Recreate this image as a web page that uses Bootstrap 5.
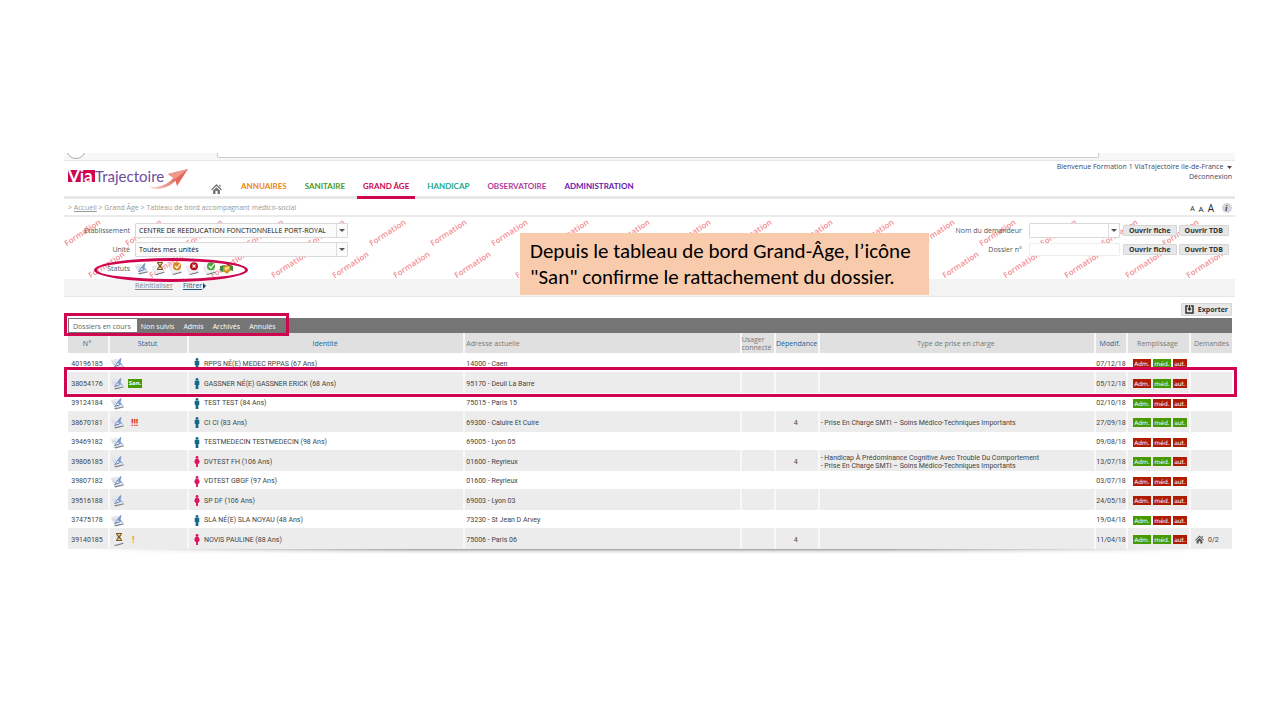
<!DOCTYPE html>
<html lang="fr">
<head>
<meta charset="utf-8">
<meta name="viewport" content="width=device-width, initial-scale=1">
<title>ViaTrajectoire - Tableau de bord</title>
<link rel="stylesheet" href="https://cdn.jsdelivr.net/npm/bootstrap@5.3.0/dist/css/bootstrap.min.css">
<style>
:root{--vt-pink:#cf0550;--vt-line:#e8e8e8}
body{font:7px/10px "Open Sans","Noto Sans",sans-serif;color:#555;background:#fff}
.app{padding:153px 45px 0 64px}
.browser{height:8px;background:#f7f7f7;border-bottom:1px solid #e6e6e6}
.browser .ring{width:20px;height:20px;margin:-14px 0 0 2px;border:1px solid #aaa;background:#fff}
.browser .address{height:5px;margin:0 136px 0 131px;background:#fff;border:1px solid #ccc;border-top:0;border-radius:0 0 2px 2px}
.top{height:38px;border-bottom:3px solid var(--vt-line)}
.logo{width:122px;height:32px;margin:3px 0 0 3px}
.menu{margin-left:16px}
.menu a{font:700 8px/12px Lato,sans-serif;margin:0 3px -3px;padding:0 6px 4px;border-bottom:3px solid transparent;text-decoration:none}
.menu a.home{margin-left:0;padding-bottom:2px}
.menu a.active{border-color:var(--vt-pink)}
.c-ann{color:#ee8512}.c-san{color:#4e9a1c}.c-age{color:#cf0550}.c-han{color:#1ea88a}.c-obs{color:#b13a9e}.c-adm{color:#6417b0}
.user{padding:1px 3px 0 0;line-height:10px;color:#3b4868}
.user a{color:inherit;text-decoration:none}
.crumbs{height:18px;border-bottom:2px solid #ebebeb;padding:2px 3px 0 4px;color:#999}
.crumbs a{color:#999}
.a-s{font-size:7px;line-height:9px}.a-m{font-size:8px;line-height:9px}.a-l{font-size:10px;line-height:10px}
.panel-top{height:62px;padding-top:4px}
.watermark{inset:0;width:100%;height:100%;font:700 8px "Open Sans",sans-serif;fill:#ee6a72;opacity:.65;pointer-events:none}
.line{height:19px}
.left .line>label,.left .line>.cap{width:66px;margin-right:5px;text-align:right}
.field{font:7px/10px "Open Sans",sans-serif;color:#111;height:15px;padding:2px 16px 1px 3px;border:1px solid #d9d9d9;border-radius:1px;background:#fbfbfb;appearance:none;outline-offset:0}
.picker{width:213px}
.picker .field{width:100%}
.picker::after{content:"";right:3px;top:6px;border:3px solid transparent;border-top-color:#555;position:absolute;pointer-events:none}
.picker::before{content:"";right:11px;top:1px;bottom:1px;width:1px;background:#ddd;position:absolute}
.picker.short{width:91px;margin:0 3px 0 7px}
.picker.short .field{background:#fff}
.right-side{padding-right:6px}
.free{width:91px;height:13px;margin:0 3px 0 7px;background:#fff;border-color:#eee}
.push{font:700 7px/9px "Open Sans",sans-serif;color:#333;background:#e7e7e7;border:1px solid #d6d6d6;height:11px;padding:0 5px;border-radius:1px}
.push+.push{margin-left:2px}
.st{width:13px;height:13px;margin-right:4px}
.ellipse{left:30px;top:41px;width:154px;height:24px;border:3px solid var(--vt-pink);border-radius:50%}
.panel-links{height:18px;background:#f3f3f3;border-bottom:1px solid #e6e6e6;padding:2px 0 0 71px;color:#888}
.panel-links a{color:#888;margin-right:10px}
.panel-links a.go{color:#1c5c8c;margin:0 1px 0 0}
.note{left:456px;top:16px;width:409px;padding:5px 10px;background:#f8cbad;color:#000;font:21px/26px Carlito,Calibri,sans-serif;z-index:3}
.work{padding:0 3px 0 4px}
.export-row{height:21px;padding-top:6px}
.push.exp{height:13px;line-height:11px;padding:0 3px}
.tabs{background:#757575;height:15px;padding:1px 0 1px 1px}
.tabs button{font:7px/13px "Open Sans",sans-serif;color:#fff;border:0;background:none;padding:1px 5px 0 4px}
.tabs button.on{background:#fff;color:#666;padding:1px 6px 0 4px}
.frame{border:3px solid var(--vt-pink);position:absolute;pointer-events:none;z-index:2}
.frame.tabs-frame{left:-4px;top:-5px;width:225px;height:23px}
.records{table-layout:fixed;margin:0;border-collapse:separate;border-spacing:0;color:#444;--bs-table-bg:transparent}
.records>:not(caption)>*>*{padding:2px 3px 0 1px;border:0;border-right:2px solid #f8f8f8;vertical-align:middle;line-height:8px;color:inherit;background:none;box-shadow:none}
.records>:not(caption)>*>:last-child{border-right:0}
.records thead th{height:20px;background:#e0e0e0;font-weight:400;text-align:center;color:#777;white-space:nowrap}
.records thead th.s{color:#1a649b}
.records tbody td{font:7px/8px Roboto,sans-serif;height:18px;white-space:nowrap}
.records tbody tr:first-child td{height:19px}
.records tbody tr:nth-child(even) td{height:21px;background:#ececec}
.records tbody tr:nth-child(odd) td{border-color:#fff}
.records tr.picked{position:relative}
.records tr.picked .frame{inset:-5px -5px -4px -4px}
.pill{display:inline-block;height:9px;font:6px/9px "DejaVu Sans",sans-serif;color:#fff;text-align:center;background:#b01c00;width:18px;margin-right:2px;vertical-align:middle}
.pill.ok{background:#479a00}
.pill.thin{width:14px;margin:0}
.pill.sanitaire{font:700 6px/9px "Open Sans",sans-serif}
.alert-high,.alert-low{font-size:9px;margin-left:3px;color:#d8260c}
.alert-low{color:#ee9a1c;margin-left:4px}
.shade{height:5px;background:linear-gradient(#999,#ddd 40%,#fff);mask-image:linear-gradient(90deg,transparent 2%,#000 30%,#000 70%,transparent 98%)}
svg{display:block}
</style>
</head>
<body>
<svg width="0" height="0" class="position-absolute" aria-hidden="true">
  <defs>
    <symbol id="sheet" viewBox="0 0 13 13"><path d="M3 12l9-2.500.5 1.200L4.500 13z" fill="#6f7378"/><path d="M0 5l7-2 5.500 6.500-9 2.500z" fill="#eeeff2" stroke="#cdd1d6" stroke-width=".4"/></symbol>
    <symbol id="write" viewBox="0 0 13 13"><path d="M3 11l9.500-1.800.5 1.100L4.500 12.500z" fill="#7d8187"/><path d="M0 3.500l6-1.500L12.500 9 4 11z" fill="#eceef2" stroke="#d0d4da" stroke-width=".4"/><path d="M1.500 4.500L5 9M3.500 4l2 2.500" stroke="#b5bbc8" stroke-width=".7"/><path d="M3.500 9.500L5 6.500 9.500 1l1 .8-1 3.700 2.500 3.300-3-1.300z" fill="#7f9ace"/><path d="M4 9.500l3-3.500 1 1.500z" fill="#fff"/><path d="M3.500 9.500l5-1.500" stroke="#4f6dab" stroke-width=".9"/></symbol>
    <symbol id="wait" viewBox="0 0 13 13"><use href="#sheet"/><path d="M5 0h6v1L9 4l2 3v1H5V7l2-3-2-3z" fill="#7b5a23"/><path d="M6 1h4L8 3zM8 5l2 2H6z" fill="#eed28a"/></symbol>
    <symbol id="valid" viewBox="0 0 13 13"><use href="#sheet"/><circle cx="8" cy="4.200" r="4" fill="#d9851c"/><path d="M6 4l2 2 3-4" fill="none" stroke="#fff" stroke-width="1.200"/></symbol>
    <symbol id="refuse" viewBox="0 0 13 13"><use href="#sheet"/><circle cx="8" cy="4.200" r="4" fill="#b90d1d"/><path d="M6.500 2.700l3 3m0-3l-3 3" stroke="#fff" stroke-width="1.200"/></symbol>
    <symbol id="accept" viewBox="0 0 13 13"><use href="#sheet"/><circle cx="8" cy="4.200" r="4" fill="#4aa63c"/><path d="M6 4l2 2 3-4" fill="none" stroke="#fff" stroke-width="1.200"/></symbol>
    <symbol id="shake" viewBox="0 0 13 13"><path d="M0 4l5-1v6l-3 1-2-2z" fill="#3c8a3f"/><path d="M3 5l4-2 4 1v4l-4 4-4-3z" fill="#cf9428"/><path d="M4 6l4-2 2 2-4 3z" fill="#f6dc83"/><path d="M10 3l3 1v5l-3-1z" fill="#567f2c"/><path d="M7 2h2l1 2H8z" fill="#8c3318"/></symbol>
    <symbol id="man" viewBox="0 0 6 12"><circle cx="3" cy="1.500" r="1.500"/><path d="M.5 3h5v4.500H4.500V12h-3V7.500H.5z"/></symbol>
    <symbol id="woman" viewBox="0 0 6 12"><circle cx="3" cy="1.500" r="1.500"/><path d="M1.500 3h3L6 6 5 8.500H4V12H2V8.500H1L0 6z"/></symbol>
    <symbol id="house" viewBox="0 0 11 10"><path d="M0 5.500L5.500 0 11 5.500l-1 .8L5.500 2 1 6.300zM2 6.500L5.500 3.200 9 6.500V10H6.500V7h-2v3H2zM8.200.8h1.300v2.500L8.200 2z"/></symbol>
  </defs>
</svg>

<div class="app">
  <div class="browser overflow-hidden d-flex" aria-hidden="true"><div class="ring rounded-circle"></div><div class="address flex-grow-1"></div></div>

  <header class="top d-flex">
    <svg class="logo flex-shrink-0" viewBox="0 0 122 32" role="img" aria-label="ViaTrajectoire">
      <defs><linearGradient id="sw" x1="0" x2="1"><stop offset="0" stop-color="#fdeeea"/><stop offset="1" stop-color="#e0655c"/></linearGradient></defs>
      <path d="M80 22c10 6 23 2 31-8l-3-2c-6 8-16 13-28 10z" fill="url(#sw)"/>
      <path d="M101 10l20-5-11 17-2-7z" fill="#e4685f"/><path d="M101 10l20-5-13 10z" fill="#f09a8c"/>
      <rect x="1" y="6" width="27" height="12" fill="#cf0550"/>
      <text x="1" y="18" font-family="Lato" font-weight="700" font-size="17" fill="#fff">Via</text>
      <text x="28" y="18" font-family="Lato" font-weight="400" font-size="15" fill="#6e4b9b">Trajectoire</text>
    </svg>
    <nav class="menu d-flex align-items-end" aria-label="Principal">
      <a class="home" href="#" aria-label="Accueil"><svg width="11" height="10" fill="#777"><use href="#house"/></svg></a>
      <a class="c-ann ms-1" href="#">ANNUAIRES</a>
      <a class="c-san" href="#">SANITAIRE</a>
      <a class="c-age active" href="#">GRAND ÂGE</a>
      <a class="c-han" href="#">HANDICAP</a>
      <a class="c-obs" href="#">OBSERVATOIRE</a>
      <a class="c-adm" href="#">ADMINISTRATION</a>
    </nav>
    <div class="user ms-auto text-end"><div>Bienvenue Formation 1 ViaTrajectoire Ile-de-France &nbsp;<svg class="d-inline-block" width="5" height="3"><path d="M0 0h5L2.500 3z" fill="#444"/></svg></div><a href="#">Déconnexion</a></div>
  </header>

  <div class="crumbs d-flex align-items-center">
    <div>&gt; <a href="#">Accueil</a> &gt; Grand Âge &gt; Tableau de bord accompagnant médico-social</div>
    <div class="ms-auto d-flex align-items-end text-dark"><span class="a-s">A</span><span class="a-m mx-1">A</span><span class="a-l">A</span>
      <svg class="ms-2" width="10" height="10"><circle cx="5" cy="5" r="5" fill="#d5d5d5"/><text x="3" y="8" font-family="Liberation Serif" font-style="italic" font-weight="700" font-size="9" fill="#444">i</text></svg></div>
  </div>

  <section class="position-relative">
    <div class="panel-top position-relative">
      <svg class="watermark position-absolute" aria-hidden="true" id="wm"></svg>
      <div class="d-flex justify-content-between position-relative">
        <div class="left">
          <div class="line d-flex align-items-center"><label for="etab">Établissement</label><div class="picker position-relative"><select class="field" id="etab"><option>CENTRE DE REEDUCATION FONCTIONNELLE PORT-ROYAL</option></select></div></div>
          <div class="line d-flex align-items-center"><label for="unite">Unité</label><div class="picker position-relative"><select class="field" id="unite"><option>Toutes mes unités</option></select></div></div>
          <div class="line d-flex align-items-center"><span class="cap">Statuts</span>
            <svg class="st"><use href="#write"/></svg><svg class="st"><use href="#wait"/></svg><svg class="st"><use href="#valid"/></svg><svg class="st"><use href="#refuse"/></svg><svg class="st"><use href="#accept"/></svg><svg class="st"><use href="#shake"/></svg></div>
        </div>
        <div class="right-side">
          <div class="line d-flex align-items-center justify-content-end"><label for="nom">Nom du demandeur</label><div class="picker short position-relative"><select class="field" id="nom"><option></option></select></div><button class="push">Ouvrir fiche</button><button class="push">Ouvrir TDB</button></div>
          <div class="line d-flex align-items-center justify-content-end"><label for="num">Dossier n°</label><input class="field free" id="num" type="text"><button class="push">Ouvrir fiche</button><button class="push">Ouvrir TDB</button></div>
        </div>
      </div>
    </div>
    <div class="ellipse position-absolute"></div>
    <div class="panel-links"><a href="#">Réinitialiser</a><a class="go" href="#">Filtrer</a><svg class="d-inline-block" width="3" height="6"><path d="M0 0l3 3-3 3z" fill="#1c3c6c"/></svg></div>
    <div class="note position-absolute">Depuis le tableau de bord Grand-Âge, l’icône<br>"San" confirme le rattachement du dossier.</div>
  </section>

  <main class="work">
    <div class="export-row d-flex justify-content-end"><button class="push exp d-flex align-items-center"><svg class="me-1" width="9" height="9"><path d="M3 1H1v7h7V1H6M4.500 0v5M3 3.500L4.500 5 6 3.500" fill="none" stroke="#333" stroke-width="1.500"/></svg>Exporter</button></div>
    <div class="tabs d-flex position-relative"><button class="on">Dossiers en cours</button><button>Non suivis</button><button>Admis</button><button>Archivés</button><button>Annulés</button><div class="frame tabs-frame"></div></div>
    <table class="table records">
      <colgroup><col style="width:42px"><col style="width:79px"><col><col><col style="width:34px"><col style="width:44px"><col><col style="width:32px"><col style="width:63px"><col style="width:41px"></colgroup>
      <thead><tr><th class="s">N°</th><th class="s">Statut</th><th class="s">Identité</th><th class="text-start">Adresse actuelle</th><th class="text-start px-0">Usager<br>connecté</th><th class="s px-0">Dépendance</th><th>Type de prise en charge</th><th class="s">Modif.</th><th>Remplissage</th><th class="px-0">Demandes</th></tr></thead>
      <tbody id="rows"></tbody>
    </table>
    <div class="shade"></div>
  </main>
</div>

<script src="https://cdn.jsdelivr.net/npm/bootstrap@5.3.0/dist/js/bootstrap.bundle.min.js"></script>
<script>
// Dossiers : numéro, icône, signalement, sexe, identité, adresse, dépendance, prise en charge, date, état des volets
const smti = '- Prise En Charge SMTI – Soins Médico-Techniques Importants';
const records = [
  ['40196185','write','','man','RPPS NÉ(E) MEDEC RPPAS (67 Ans)','14000 - Caen','','','07/12/18','010'],
  ['38054176','write','san','man','GASSNER NÉ(E) GASSNER ERICK (68 Ans)','95170 - Deuil La Barre','','','05/12/18','010'],
  ['39124184','write','','man','TEST TEST (84 Ans)','75015 - Paris 15','','','02/10/18','100'],
  ['38670181','write','!!!','man','CI CI (83 Ans)','69300 - Caluire Et Cuire','4',smti,'27/09/18','111'],
  ['39469182','write','','man','TESTMEDECIN TESTMEDECIN (98 Ans)','69005 - Lyon 05','','','09/08/18','000'],
  ['39806185','write','','woman','DVTEST FH (106 Ans)','01600 - Reyrieux','4','- Handicap À Prédominance Cognitive Avec Trouble Du Comportement<br>'+smti,'13/07/18','110'],
  ['39807182','write','','woman','VDTEST GBGF (97 Ans)','01600 - Reyrieux','','','03/07/18','000'],
  ['39516188','write','','woman','SP DF (106 Ans)','69003 - Lyon 03','','','24/05/18','000'],
  ['37475178','write','','man','SLA NÉ(E) SLA NOYAU (48 Ans)','73230 - St Jean D Arvey','','','19/04/18','100'],
  ['39140185','wait','!','woman','NOVIS PAULINE (88 Ans)','75006 - Paris 06','4','','11/04/18','110']
];
const flag = f => f === 'san' ? '<span class="pill ok thin sanitaire">San.</span>'
  : f ? `<b class="${f === '!' ? 'alert-low' : 'alert-high'}">${f}</b>` : '';
document.getElementById('rows').innerHTML = records.map(([n,ic,f,sex,id,ad,dep,type,date,st]) => `
<tr${f === 'san' ? ' class="picked"' : ''}><td class="text-center">${n}${f === 'san' ? '<span class="frame"></span>' : ''}</td>
<td><div class="d-flex align-items-center"><svg class="st"><use href="#${ic}"/></svg>${flag(f)}</div></td>
<td><div class="d-flex align-items-center"><svg class="mx-1" width="6" height="11" fill="${sex === 'man' ? '#14688a' : '#e0115f'}"><use href="#${sex}"/></svg>${id}</div></td>
<td>${ad}</td><td></td><td class="text-center">${dep}</td><td>${type}</td><td class="px-0 text-center">${date}</td>
<td>${['Adm.','méd.','aut.'].map((t,i) => `<span class="pill${st[i] === '1' ? ' ok' : ''}${i === 2 ? ' thin' : ''}${i ? '' : ' ms-1'}">${t}</span>`).join('')}</td>
<td class="px-1">${n === '39140185' ? '<div class="d-flex align-items-center"><svg class="me-1" width="9" height="9" fill="#555"><use href="#house"/></svg>0/2</div>' : ''}</td></tr>`).join('');

// Filigrane répété sur toute la largeur du panneau de filtres
const wm = document.getElementById('wm');
let marks = '';
for (let x = 18; x < wm.clientWidth - 10; x += 61) {
  marks += `<text text-anchor="middle" transform="translate(${x + 2} 18) rotate(-33)">Formation</text>`;
  if (x + 45 < wm.clientWidth) marks += `<text text-anchor="middle" transform="translate(${x + 26} 50) rotate(-33)">Formation</text>`;
}
wm.innerHTML = marks;
</script>
</body>
</html>
